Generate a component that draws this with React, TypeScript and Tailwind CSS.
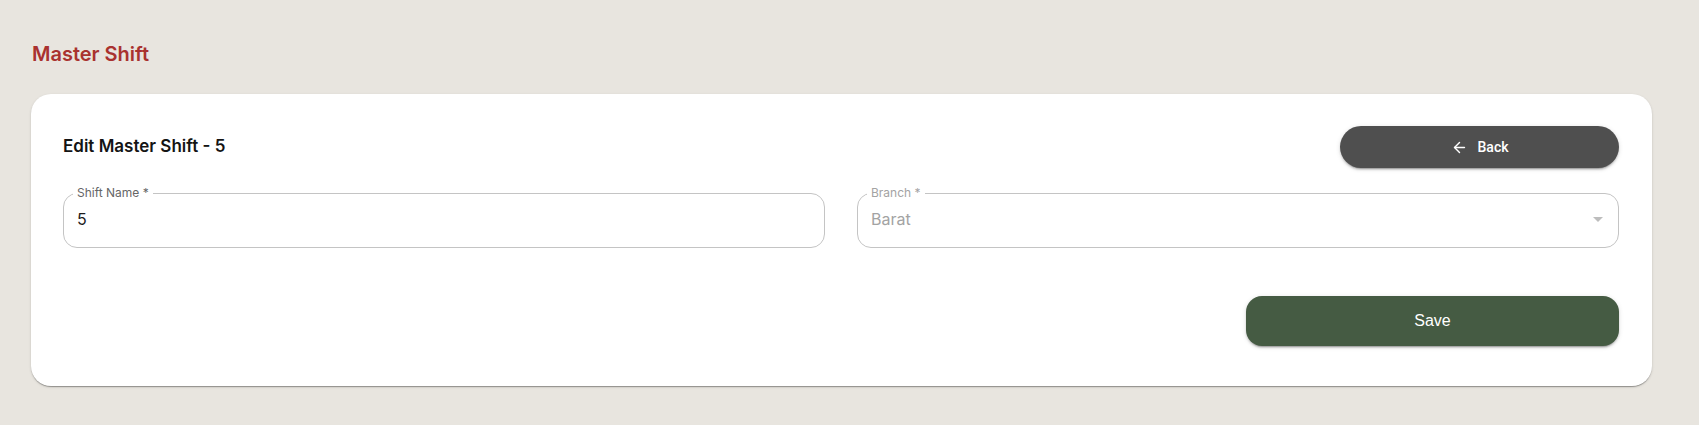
import { ArrowLeft } from 'lucide-react';

const FONT = "font-['Inter','Noto_Sans',sans-serif]";

function OutlinedField({ label, value, disabled, select }: { label: string; value: string; disabled?: boolean; select?: boolean }) {
  return (
    <fieldset className="min-w-0 rounded-[14px] border border-[#c4c4c4] pl-[9px] pr-[14px] pb-[16px]">
      <legend className={`px-1 text-[12px] leading-4 ${disabled ? 'text-[#a3a3a3]' : 'text-[#666666]'}`}>{label}</legend>
      <div className="flex items-center justify-between pl-1 pt-[6px]">
        <span className={`text-[16px] leading-6 ${disabled ? 'text-[#a3a3a3]' : 'text-[#1c1c1c]'}`}>{value}</span>
        {select && (
          <svg width="10" height="5" viewBox="0 0 10 5" className="mr-[1px]">
            <path d="M0 0l5 5 5-5z" fill="#bdbdbd" />
          </svg>
        )}
      </div>
    </fieldset>
  );
}

export default function App() {
  return (
    <main className={`min-h-screen bg-[#e8e5df] pt-10 ${FONT}`}>
      <h1 className="ml-8 text-[20px] leading-7 font-semibold text-[#a9322f]">Master Shift</h1>

      <section className="ml-[31px] mr-[47px] mt-[26px] rounded-[20px] bg-white pl-8 pr-[33px] pt-8 pb-10 shadow-[0_2px_1px_-1px_rgba(0,0,0,0.2),0_1px_1px_0_rgba(0,0,0,0.14),0_1px_3px_0_rgba(0,0,0,0.12)]">
        <div className="flex items-center justify-between">
          <h2 className="text-[17px] font-semibold text-[#141414]">Edit Master Shift - 5</h2>
          <button className="flex h-[42px] w-[279px] items-center justify-center gap-[10px] rounded-full bg-[#4f4f4f] font-['Roboto',sans-serif] text-[14px] font-medium text-white shadow-[0_3px_1px_-2px_rgba(0,0,0,0.2),0_2px_2px_0_rgba(0,0,0,0.14),0_1px_5px_0_rgba(0,0,0,0.12)]">
            <ArrowLeft size={17} strokeWidth={2} />
            Back
          </button>
        </div>

        <div className="mt-[17px] grid grid-cols-2 gap-8">
          <OutlinedField label="Shift Name *" value="5" />
          <OutlinedField label="Branch *" value="Barat" disabled select />
        </div>

        <div className="mt-12 flex justify-end">
          <button className="h-[50px] w-[373px] rounded-2xl bg-[#455b43] font-['Liberation_Sans',Arial,sans-serif] text-[16px] text-white shadow-[0_3px_1px_-2px_rgba(0,0,0,0.2),0_2px_2px_0_rgba(0,0,0,0.14),0_1px_5px_0_rgba(0,0,0,0.12)]">
            Save
          </button>
        </div>
      </section>
    </main>
  );
}
